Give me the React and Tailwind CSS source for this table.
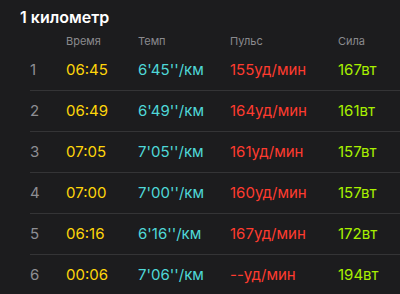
const rows = [
  { n: 1, time: '06:45', pace: "6'45''/км", hr: '155', pw: '167' },
  { n: 2, time: '06:49', pace: "6'49''/км", hr: '164', pw: '161' },
  { n: 3, time: '07:05', pace: "7'05''/км", hr: '161', pw: '157' },
  { n: 4, time: '07:00', pace: "7'00''/км", hr: '160', pw: '157' },
  { n: 5, time: '06:16', pace: "6'16''/км", hr: '167', pw: '172' },
  { n: 6, time: '00:06', pace: "7'06''/км", hr: '--', pw: '194' },
]

const cols = 'grid grid-cols-[36px_72px_92px_108px_1fr] items-center'

export default function App() {
  return (
    <div
      className="h-[294px] w-[400px] overflow-hidden bg-[#1c1c1e] text-white"
      style={{ fontFamily: 'Inter, "Noto Sans", sans-serif' }}
    >
      <h1 className="pl-[20px] pt-[6px] text-[16px] font-semibold leading-[22px]">1 километр</h1>
      <div className={`${cols} ml-[30px] mt-[5px] h-[16px] text-[11px] text-[#8a8a8e]`}>
        <span />
        <span>Время</span>
        <span>Темп</span>
        <span>Пульс</span>
        <span>Сила</span>
      </div>
      <div className="ml-[30px] mt-[1px]">
        {rows.map((r) => (
          <div key={r.n} className={`${cols} h-[41px] border-b border-[#343436] text-[15px]`}>
            <span className="text-[#8e8e93]">{r.n}</span>
            <span className="text-[#ffd60a]">{r.time}</span>
            <span className="text-[#4fd8d8]">{r.pace}</span>
            <span className="text-[#ff3b2f]">{r.hr}уд/мин</span>
            <span className="text-[#a8f000]">{r.pw}вт</span>
          </div>
        ))}
      </div>
    </div>
  )
}
